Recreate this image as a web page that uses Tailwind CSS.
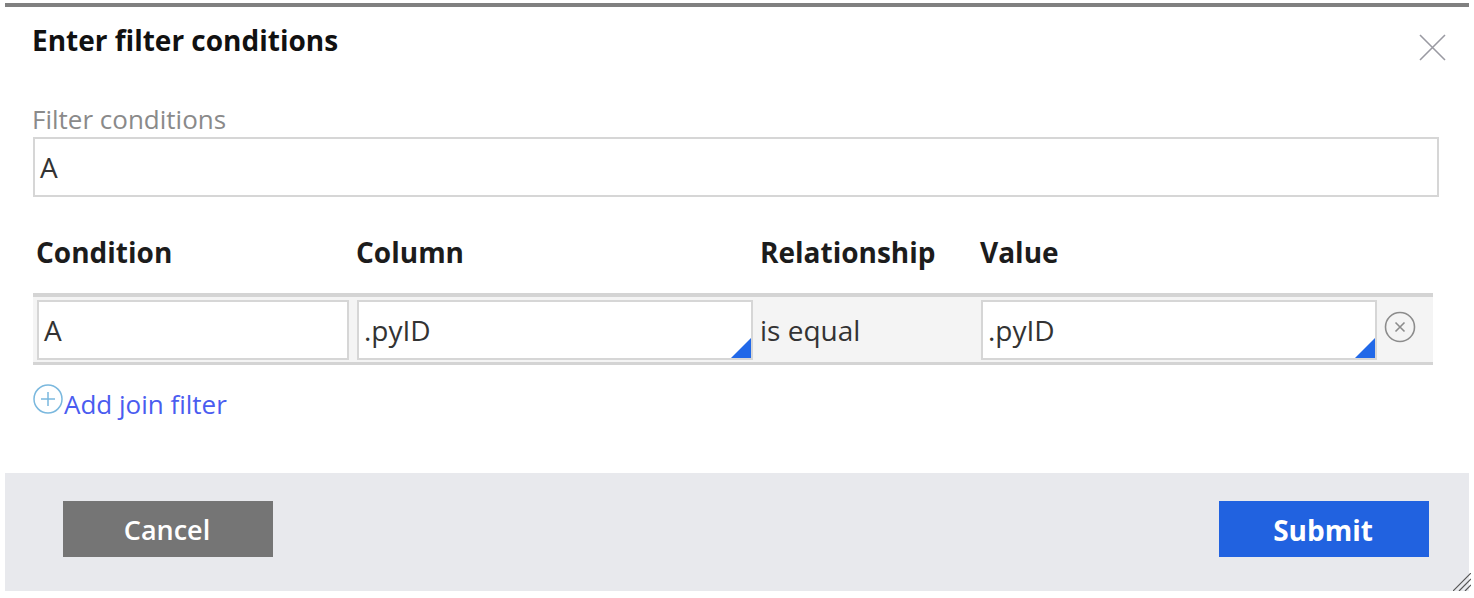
<!DOCTYPE html>
<html lang="en">
<head>
  <meta charset="UTF-8">
  <title>Enter filter conditions</title>
  <script src="https://cdn.jsdelivr.net/npm/@tailwindcss/browser@4"></script>
</head>
<body class="bg-white">
  <main class="w-[1474px] h-[598px] overflow-hidden pt-[3px] pl-[5px] font-['Open_Sans',sans-serif] text-[#333]">
    <div class="relative w-[1464px] h-[588px] flex flex-col">

      <div class="h-[4px] bg-[#808080]"></div>

      <!-- title -->
      <header class="flex justify-between h-[97px] pl-[27px] pr-[23px]">
        <h1 class="mt-[15px] text-[28px] leading-[36px] font-bold text-[#111]">Enter filter conditions</h1>
        <button class="mt-[27px] w-[28px] h-[28px] text-[#9a9aa2]">
          <svg viewBox="0 0 28 28" class="w-[28px] h-[28px]" fill="none" stroke="currentColor" stroke-width="1.6">
            <path d="M2 1l25 25M27 1L2 26" />
          </svg>
        </button>
      </header>

      <!-- filter conditions field -->
      <section class="pl-[28px] pr-[30px]">
        <label class="block -ml-px text-[26px] leading-[30px] text-[#8a8a8a]">Filter conditions</label>
        <div class="mt-[3px] h-[60px] border-2 border-[#d6d6d6] pl-[5px] flex items-center text-[28px] text-[#333]">A</div>
      </section>

      <!-- table -->
      <section class="pl-[28px] pr-[36px] mt-[25px]">
        <div class="flex h-[71px] pt-[13px] text-[28px] leading-[34px] font-bold text-[#1c1c1c]">
          <div class="w-[323px] pl-[3px]">Condition</div>
          <div class="w-[404px]">Column</div>
          <div class="w-[220px]">Relationship</div>
          <div>Value</div>
        </div>
        <div class="h-[72px] border-t-[4px] border-b-[3px] border-[#d4d4d4] bg-[#f4f4f4] flex items-center pl-[4px] text-[28px]">
          <div class="w-[312px] h-[60px] border-2 border-[#d6d6d6] bg-white pl-[5px] flex items-center">A</div>
          <div class="relative ml-[8px] w-[396px] h-[60px] border-2 border-[#d6d6d6] bg-white pl-[5px] flex items-center">
            .pyID
            <span class="absolute right-0 bottom-0 w-0 h-0 border-l-[20px] border-l-transparent border-b-[20px] border-b-[#2168e8]"></span>
          </div>
          <div class="w-[228px] pl-[7px]">is equal</div>
          <div class="relative w-[396px] h-[60px] border-2 border-[#d6d6d6] bg-white pl-[5px] flex items-center">
            .pyID
            <span class="absolute right-0 bottom-0 w-0 h-0 border-l-[20px] border-l-transparent border-b-[20px] border-b-[#2168e8]"></span>
          </div>
          <svg viewBox="0 0 32 32" class="ml-[7px] -mt-[6px] w-[32px] h-[32px] text-[#8c8c8c]" fill="none" stroke="currentColor" stroke-width="1.6">
            <circle cx="16" cy="16" r="14.5" />
            <path d="M11.5 11.5l9 9M20.5 11.5l-9 9" />
          </svg>
        </div>
        <a class="flex items-start mt-[19px] text-[26px] leading-[34px] text-[#4a5cf0]">
          <svg viewBox="0 0 30 30" class="w-[30px] h-[30px] text-[#7ab8de]" fill="none" stroke="currentColor" stroke-width="1.5">
            <circle cx="15" cy="15" r="14" />
            <path d="M15 8v14M8 15h14" />
          </svg>
          <span class="mt-[3px] ml-px">Add join filter</span>
        </a>
      </section>

      <!-- footer -->
      <footer class="absolute left-0 right-0 top-[470px] h-[118px] bg-[#e8e9ed] flex justify-between pl-[58px] pr-[40px] pt-[28px]">
        <button class="w-[210px] h-[56px] pt-[2px] pr-[2px] bg-[#757575] text-white text-[27px] font-semibold">Cancel</button>
        <button class="w-[210px] h-[56px] pt-[2px] pr-[2px] bg-[#2162e0] text-white text-[28px] font-bold">Submit</button>
        <svg viewBox="0 0 18 18" class="absolute right-[-2px] bottom-0 w-[18px] h-[18px] text-[#555]" fill="none" stroke="currentColor" stroke-width="1.2">
          <path d="M0 18L18 0M6 18L18 6M12 18l6-6" />
        </svg>
      </footer>
    </div>
  </main>
</body>
</html>
